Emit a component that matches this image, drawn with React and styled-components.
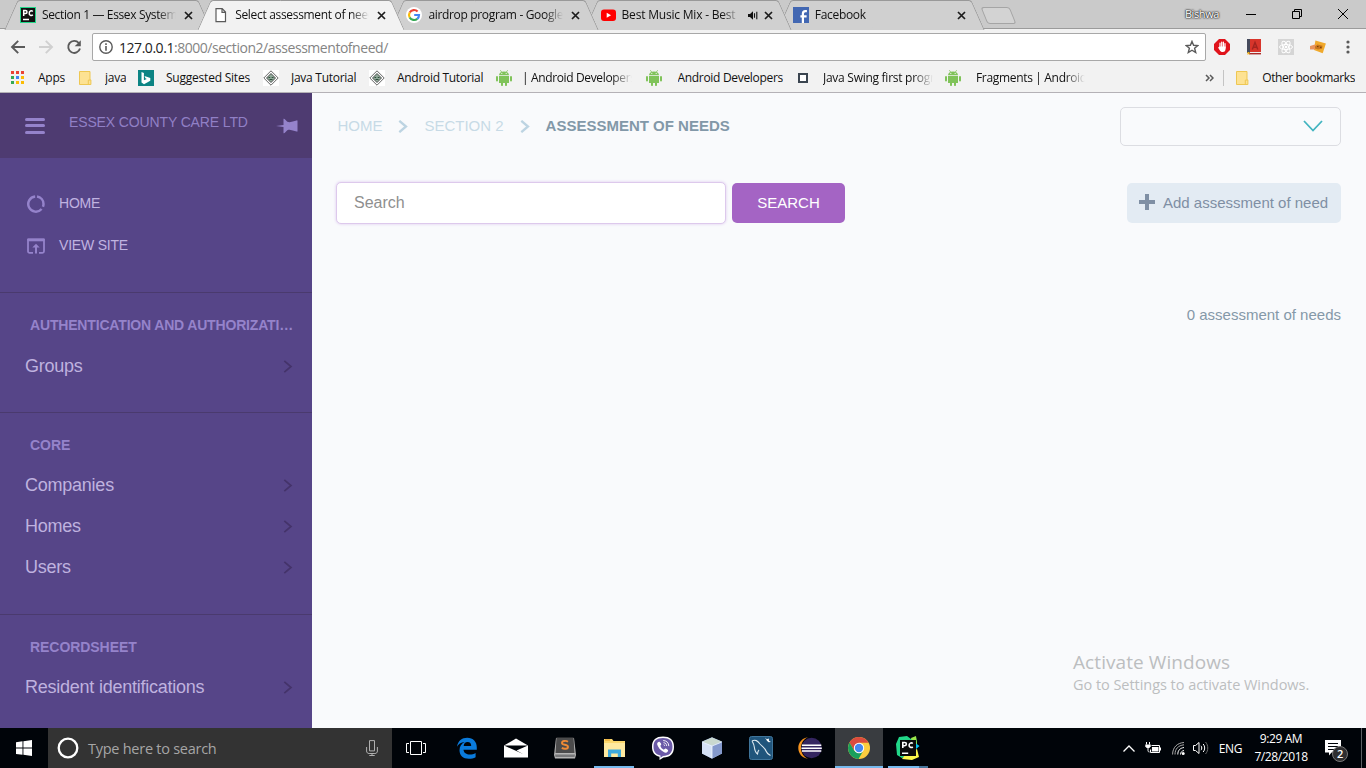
import React from 'react'
import styled, { createGlobalStyle } from 'styled-components'

const GlobalStyle = createGlobalStyle`
  * { box-sizing: border-box; }
  body {
    margin: 0;
    overflow: hidden;
    font-family: "Liberation Sans", Arial, sans-serif;
  }
  svg { display: block; flex: none; }
`

const ui = '"Open Sans", "Noto Sans", sans-serif'

const Screen = styled.div`
  display: flex;
  flex-direction: column;
  width: 1366px;
  height: 768px;
`

/* ---------- browser tabs ---------- */

const TabStrip = styled.div`
  display: flex;
  height: 29px;
  padding-left: 5px;
  background: #cacaca;
  box-shadow: inset 0 -1px 0 #9b9b9b;
  font-family: ${ui};
`

const Tab = styled.div`
  position: relative;
  z-index: ${p => p.$z};
  display: flex;
  align-items: center;
  width: 206.2px;
  height: 29px;
  margin-right: -13px;
  padding: 1px 18px 0 15px;
  isolation: isolate;

  &::before,
  &::after {
    content: '';
    position: absolute;
    z-index: -1;
    top: 0;
    height: ${p => (p.$active ? 29 : 28.5)}px;
    background: ${p => (p.$active ? '#f2f2f2' : '#d0d0d0')};
    border-top: 1px solid #999;
  }
  &::before {
    left: 6px;
    width: 100px;
    border-left: 1px solid #999;
    border-top-left-radius: 3px;
    transform: skewX(-24deg);
  }
  &::after {
    right: 6px;
    width: 110px;
    border-right: 1px solid #999;
    border-top-right-radius: 3px;
    transform: skewX(24deg);
  }
`

const TabTitle = styled.span`
  flex: 1;
  margin-left: 6px;
  overflow: hidden;
  white-space: nowrap;
  font-size: 12px;
  line-height: 18px;
  letter-spacing: ${p => p.$ls || -0.3}px;
  color: #111;
  mask-image: linear-gradient(to right, #000 calc(100% - 18px), transparent);
`

const TabEnd = styled.span`
  display: flex;
  align-items: center;
  gap: 6px;
  margin-left: 8px;
`

const NewTab = styled.div`
  width: 29px;
  height: 17px;
  margin: 7px 0 0 13px;
  background: #d3d3d3;
  border: 1px solid #a5a5a5;
  border-radius: 3px;
  transform: skewX(22deg);
`

const WindowControls = styled.div`
  display: flex;
  align-items: center;
  gap: 36px;
  height: 27px;
  margin-left: auto;
  padding-right: 18px;
`

const Profile = styled.span`
  font-size: 11px;
  letter-spacing: -0.4px;
  color: #fff;
  text-shadow: 0 0 1px #222, 0 0 2px #222, 0 0 2px #333;
  margin-right: -9px;
`

/* ---------- toolbar ---------- */

const Toolbar = styled.div`
  display: flex;
  align-items: center;
  height: 35px;
  padding: 1px 10px 0 10px;
  background: #f2f2f2;
  font-family: ${ui};
`

const NavButtons = styled.div`
  display: flex;
  gap: 12px;
  width: 82px;
`

const Omnibox = styled.div`
  display: flex;
  align-items: center;
  width: 1114px;
  height: 28px;
  padding: 0 6px;
  background: #fff;
  border: 1px solid #a8a8a8;
  border-radius: 2px;
`

const Url = styled.span`
  flex: 1;
  margin-left: 6px;
  font-size: 14px;
  letter-spacing: -0.46px;
  color: #222;
  span { color: #848484; }
`

const Extensions = styled.div`
  display: flex;
  align-items: center;
  gap: 16px;
  margin-left: 8px;
  svg:last-child { margin-left: 4px; }
`

const BookmarkBar = styled.div`
  display: flex;
  align-items: center;
  height: 29px;
  padding: 0 0 1px 10px;
  background: #f2f2f2;
  border-bottom: 1px solid #b4b1b6;
  font-family: ${ui};
`

const Bookmark = styled.div`
  display: flex;
  align-items: center;
  gap: ${p => p.$gap || 12}px;
  width: ${p => p.$width}px;
`

const BookmarkLabel = styled.span`
  max-width: 110px;
  overflow: hidden;
  white-space: nowrap;
  font-size: 12px;
  line-height: 18px;
  letter-spacing: ${p => p.$ls || -0.27}px;
  color: #111;
  mask-image: ${p => (p.$fade ? 'linear-gradient(to right, #000 calc(100% - 20px), transparent)' : 'none')};
`

const Overflow = styled.div`
  display: flex;
  align-items: center;
  margin-left: auto;
  padding-right: 11px;
`

const BarSeparator = styled.div`
  width: 1px;
  height: 16px;
  margin: 0 10px 0 9px;
  background: #c4c4c4;
`

/* ---------- admin page ---------- */

const Page = styled.div`
  display: flex;
  flex: 1;
  min-height: 0;
  background: #f9fafc;
`

const Sidebar = styled.div`
  width: 312px;
  overflow: hidden;
  background: #564588;
`

const SidebarHeader = styled.div`
  display: flex;
  align-items: center;
  height: 65px;
  padding: 0 14px 0 25px;
  background: #4e3b71;
`

const Burger = styled.div`
  display: flex;
  flex-direction: column;
  gap: 3.5px;
  width: 20px;
  span {
    height: 3px;
    border-radius: 2px;
    background: #9583cb;
  }
`

const SiteName = styled.div`
  flex: 1;
  margin: -7px 0 0 24px;
  font-size: 14px;
  letter-spacing: -0.13px;
  white-space: nowrap;
  color: #9180c6;
`

const SiteLinks = styled.div`
  height: 134px;
  padding: 24px 25px 0;
`

const SiteLink = styled.div`
  display: flex;
  align-items: center;
  gap: 13px;
  height: 42px;
  font-size: 14px;
  letter-spacing: -0.2px;
  color: #c0b3e0;
  padding-left: 1px;
  span { margin-bottom: 1px; }
`

const Section = styled.div`
  padding: 20px 17px 26px 25px;
  border-top: 1px solid #4a3a6e;
`

const SectionTitle = styled.div`
  height: 32px;
  padding: 4px 0 0 5px;
  overflow: hidden;
  white-space: nowrap;
  text-overflow: ellipsis;
  font-size: 14px;
  font-weight: bold;
  letter-spacing: ${p => p.$ls || -0.06}px;
  color: #9583cb;
`

const SectionItem = styled.div`
  display: flex;
  align-items: center;
  justify-content: space-between;
  height: 41px;
  padding-top: ${p => (p.$single ? 1 : 0)}px;
  padding-right: 2.5px;
  font-size: 18px;
  letter-spacing: -0.24px;
  color: #bfb2df;
`

const Content = styled.div`
  flex: 1;
  display: flex;
  flex-direction: column;
  padding: 14px 25px 0 24px;
`

const TopRow = styled.div`
  display: flex;
  justify-content: space-between;
  height: 39px;
`

const Breadcrumbs = styled.div`
  display: flex;
  align-items: center;
  padding: 0 0 2px 1.4px;
  font-size: 15px;
  color: #c7dae6;
  svg { margin: 2px 16px 0; }
`

const Current = styled.span`
  font-weight: bold;
  color: #8298a8;
`

const SelectBox = styled.div`
  display: flex;
  align-items: center;
  justify-content: flex-end;
  width: 221px;
  height: 39px;
  padding: 0 17px 2px 0;
  border: 1px solid #dcdde2;
  border-radius: 5px;
`

const ActionRow = styled.div`
  display: flex;
  align-items: center;
  height: 42px;
  margin-top: 36px;
`

const SearchInput = styled.div`
  width: 390px;
  height: 42px;
  padding: 0 17px;
  background: #fff;
  border: 1px solid #ddc9ec;
  border-radius: 5px;
  box-shadow: 0 0 3px #dcc6ee;
  font-size: 16px;
  line-height: 40px;
  color: #8f8f8f;
`

const SearchButton = styled.div`
  width: 113px;
  height: 40px;
  margin-left: 6px;
  border-radius: 5px;
  background: #a464c4;
  color: #fff;
  font-size: 15px;
  line-height: 40px;
  text-align: center;
`

const AddButton = styled.div`
  display: flex;
  align-items: center;
  gap: 8px;
  width: 214px;
  height: 40px;
  margin-left: auto;
  padding: 0 0 2px 12px;
  border-radius: 5px;
  background: #e3ebf3;
  color: #7f8fa4;
  font-size: 15px;
  white-space: nowrap;
`

const ResultCount = styled.div`
  margin-top: 82px;
  font-size: 15px;
  line-height: 18px;
  text-align: right;
  color: #8598a8;
`

const Watermark = styled.div`
  width: 268px;
  margin: auto 0 33px auto;
  font-family: ${ui};
  color: #bcbec0;
`

const WatermarkTitle = styled.div`
  font-size: 19px;
  line-height: 26px;
  letter-spacing: 0.08px;
`

const WatermarkText = styled.div`
  font-size: 14.5px;
  line-height: 20px;
  letter-spacing: -0.04px;
`

/* ---------- taskbar ---------- */

const Taskbar = styled.div`
  display: flex;
  height: 40px;
  background: #000409;
  font-family: ${ui};
`

const StartButton = styled.div`
  display: flex;
  align-items: center;
  justify-content: center;
  width: 48px;
`

const TaskSearch = styled.div`
  display: flex;
  align-items: center;
  width: 344px;
  padding: 0 14px 0 9px;
  background: #333;
  color: #a6a6a6;
  font-size: 14.5px;
  letter-spacing: -0.26px;
  span { flex: 1; margin-left: 9px; }
`

const TaskApp = styled.div`
  display: flex;
  align-items: center;
  justify-content: center;
  width: 48px;
  height: 40px;
  margin-right: ${p => p.$after || 1}px;
  background: ${p => (p.$focused ? '#393c40' : 'none')};
  box-shadow: ${p => (p.$focused ? 'inset 0 -2px 0 #76b9ed' : 'none')};
`

const RunningApp = styled(TaskApp)`
  width: 40px;
  margin: 0 5px 0 4px;
  background: linear-gradient(#76b9ed, #76b9ed) 0 38px / ${p => p.$line || 40}px 2px no-repeat,
    linear-gradient(#46759b, #46759b) 0 38px / 40px 2px no-repeat;
`

const Tray = styled.div`
  display: flex;
  align-items: center;
  margin-left: auto;
  color: #fff;
  font-size: 12px;
  letter-spacing: -0.4px;
`

const TrayIcon = styled.div`
  margin-right: ${p => p.$after}px;
`

const Clock = styled.div`
  width: 60px;
  margin-left: 9px;
  line-height: 18px;
  text-align: center;
`

const Notifications = styled.div`
  position: relative;
  margin: 0 20px 0 14px;
`

const Badge = styled.span`
  position: absolute;
  left: 7px;
  top: 6px;
  width: 16px;
  height: 16px;
  border: 1px solid #777;
  border-radius: 50%;
  background: #2e2e30;
  font-size: 11px;
  font-weight: 600;
  line-height: 14px;
  text-align: center;
`

const ShowDesktop = styled.div`
  width: 5px;
  height: 40px;
  border-left: 1px solid #5c5f63;
`

/* ---------- icons ---------- */

const Svg = ({ w = 16, h = w, box, children, ...rest }) => (
  <svg width={w} height={h} viewBox={box || `0 0 ${w} ${h}`} fill="none" {...rest}>{children}</svg>
)

const CloseIcon = () => (
  <Svg w={9} stroke="#1c1c1c" strokeWidth="1.7"><path d="M1 1l7 7M8 1L1 8" /></Svg>
)

const PyCharmTile = () => (
  <Svg>
    <path d="M0 0h16v16H0z" fill="#21d789" />
    <path d="M1 1h14v14H1z" fill="#111" />
    <path d="M3.700 9V3.500h1.800a1.500 1.500 0 010 3H3.700M12.800 4.500a2 2 0 00-3.500 1.600 2 2 0 003.500 1.700M3 12.600h6" stroke="#fff" strokeWidth="1.500" />
  </Svg>
)

const PageIcon = () => (
  <Svg stroke="#5a5a5a" strokeWidth="1.2"><path d="M3 1.600h6.200l3.300 3.500v9.500H3zM9 1.800v3.500h3.400" fill="#fff" /></Svg>
)

const GoogleIcon = () => (
  <Svg>
    <circle cx="8" cy="8" r="8" fill="#fff" />
    <g strokeWidth="2.2">
      <path d="M11.600 4.500A5 5 0 003.700 5.500" stroke="#ea4335" />
      <path d="M3.700 5.500a5 5 0 000 5" stroke="#fbbc05" />
      <path d="M3.700 10.500a5 5 0 007.600 1.300" stroke="#34a853" />
      <path d="M11.300 11.800A5 5 0 0013 8H8.200" stroke="#4285f4" />
    </g>
  </Svg>
)

const YouTubeIcon = () => (
  <Svg>
    <rect x="1" y="2.500" width="15" height="11.500" rx="3" fill="#f00" />
    <path d="M6.700 5.700v5l4.400-2.500z" fill="#fff" />
  </Svg>
)

const FacebookIcon = () => (
  <Svg>
    <path d="M0 0h16v16H0z" fill="#4267b2" />
    <path d="M9.900 16V6.800c0-1.800.9-2.600 2.400-2.600h1.600M7.400 9.300h6.200" stroke="#fff" strokeWidth="2.200" />
  </Svg>
)

const AudioIcon = () => (
  <Svg w={10} h={9}>
    <path d="M0 3h2l3-2.800v8.600L2 6H0z" fill="#111" />
    <path d="M6.500 2.300v4.400M8.800.8v7.400" stroke="#111" strokeWidth="1.100" />
  </Svg>
)

const BackIcon = ({ color }) => (
  <Svg stroke={color} strokeWidth="1.9"><path d="M15 8H2.500M8.200 1.800L2 8l6.200 6.200" /></Svg>
)

const ForwardIcon = ({ color }) => (
  <Svg stroke={color} strokeWidth="1.9"><path d="M1 8h12.500M7.800 1.800L14 8l-6.200 6.200" /></Svg>
)

const ReloadIcon = () => (
  <Svg>
    <path d="M12.800 4A6 6 0 1014 9.600" stroke="#5a5a5a" strokeWidth="1.9" />
    <path d="M14.800 1.200v6.100H8.700z" fill="#5a5a5a" />
  </Svg>
)

const InfoIcon = () => (
  <Svg w={14}>
    <circle cx="7" cy="7" r="6.200" stroke="#5a5a5a" strokeWidth="1.400" />
    <path d="M7 3.200v1.700M7 6v4.700" stroke="#5a5a5a" strokeWidth="1.600" />
  </Svg>
)

const StarIcon = () => (
  <Svg w={14} stroke="#5a5a5a" strokeWidth="1.400">
    <path d="M7 1.400l1.600 3.900 4.300.3-3.300 2.700 1.100 4.200L7 10.200l-3.700 2.300 1.100-4.200-3.300-2.700 4.300-.3z" />
  </Svg>
)

const AdblockIcon = () => (
  <Svg>
    <path d="M5 0h6l5 5v6l-5 5H5l-5-5V5z" fill="#e0141c" />
    <path d="M6 9V4.200M7.700 8V3M9.400 8V3M11 9V4.500" stroke="#fff" strokeWidth="1.200" strokeLinecap="round" />
    <path d="M5.400 7.500h6.200v2.200c0 2-1 3.300-2.800 3.300-1.600 0-2.400-.6-3.200-2L4 8.600l1-.6z" fill="#fff" />
  </Svg>
)

const DictionaryIcon = () => (
  <Svg>
    <path d="M1 0h14v13H1z" fill="#d8352b" />
    <path d="M1 0h3v14H1z" fill="#454a5c" />
    <path d="M4 13h11v1H4z" fill="#eee" />
    <path d="M3 14h12v1.400H3z" fill="#aa2a28" />
    <path d="M1.500 13h2v3l-1-1-1 1z" fill="#f1b51c" />
    <path d="M6.300 10.500L9 3.500l2.800 7M7.300 8.300h3.500" stroke="#a3241f" strokeWidth="1.400" />
  </Svg>
)

const ReactIcon = () => (
  <Svg>
    <path d="M0 0h16v16H0z" fill="#d5d5d5" />
    <g stroke="#fff" strokeWidth="1">
      <ellipse cx="8" cy="8" rx="6.500" ry="2.500" />
      <ellipse cx="8" cy="8" rx="6.500" ry="2.500" transform="rotate(60 8 8)" />
      <ellipse cx="8" cy="8" rx="6.500" ry="2.500" transform="rotate(120 8 8)" />
    </g>
    <circle cx="8" cy="8" r="1.300" fill="#fff" />
  </Svg>
)

const TagIcon = () => (
  <Svg>
    <path d="M5.400 1.500l10.500 3-3.200 9.800L4 11z" fill="#f0a92c" />
    <path d="M0 7l5-1.400 2.300 2L5 10.500H0z" fill="#e8935c" />
    <path d="M5 7.500l2.500-2 5 1.300-.5 3-4 .8-3-1z" fill="#c9741a" />
    <path d="M7 7.600h1.500M10 8.300h1.500" stroke="#6b3c0c" />
  </Svg>
)

const MenuDots = () => (
  <Svg w={4} h={14}>
    <g fill="#5a5a5a"><circle cx="2" cy="2" r="1.600" /><circle cx="2" cy="7" r="1.600" /><circle cx="2" cy="12" r="1.600" /></g>
  </Svg>
)

const AppsIcon = () => {
  const colors = ['#ea4335', '#ea4335', '#ea4335', '#34a853', '#4285f4', '#fbbc05', '#34a853', '#fbbc05', '#fbbc05']
  return (
    <Svg>
      {colors.map((c, i) => <rect key={i} x={1 + (i % 3) * 5} y={1 + Math.floor(i / 3) * 5} width="3" height="3" fill={c} />)}
    </Svg>
  )
}

const FolderIcon = () => (
  <Svg>
    <path d="M2.500 1.500h10.500v8.400h.9v4.600H2.500z" fill="#fde293" stroke="#eec752" />
    <path d="M11.300 14.300v-4.200h1.700" stroke="#eec752" />
  </Svg>
)

const BingIcon = () => (
  <Svg>
    <path d="M0 0h16v16H0z" fill="#0c8484" />
    <path d="M3.500 2l2.400.9v7.300L8.800 9 7.400 8.200l-.9-2.300 5.800 2.100v2.800L6 14.200l-2.500-1.600z" fill="#fff" />
  </Svg>
)

const TutorialIcon = () => (
  <Svg>
    <path d="M0 0h16v16H0z" fill="#fff" />
    <path d="M8 .8L15.200 8 8 15.200.8 8z" stroke="#666" />
    <path d="M8 3.500L12.500 8 8 12.500 3.500 8z" fill="#8fa898" stroke="#444" strokeWidth=".9" />
    <path d="M5.500 7.500h1.700M8.700 7.500h1.800M6.500 9.500h3" stroke="#2f4f3c" />
  </Svg>
)

const AndroidIcon = () => (
  <Svg>
    <g fill="#80c35a">
      <path d="M3 5.300C3 3.200 5 1.600 8 1.600s5 1.600 5 3.700z" />
      <path d="M3 6h10v7H3z" />
      <rect x="0" y="6" width="2" height="5.500" rx="1" />
      <rect x="14" y="6" width="2" height="5.500" rx="1" />
      <rect x="5" y="12" width="2" height="4" rx=".8" />
      <rect x="9" y="12" width="2" height="4" rx=".8" />
    </g>
    <path d="M4.300.2l1.500 2M11.700.2l-1.500 2" stroke="#80c35a" strokeWidth=".8" />
    <path d="M5.300 3.400h1M9.700 3.400h1" stroke="#fff" />
  </Svg>
)

const SquareIcon = () => (
  <Svg><rect x="4" y="4" width="8" height="8" fill="#fff" stroke="#3b4550" strokeWidth="2" /></Svg>
)

const PinIcon = () => (
  <Svg w={22} h={16}>
    <path d="M0 8l7.500-1V.8c.7-.2 1.300.2 1.600.8l2.200 2.200c1.500.7 3 .6 4.500 0l4.800-1.400c.6-.2.9 0 .9.500v10.200c0 .5-.3.700-.9.500l-4.800-1.400c-1.500-.6-3-.7-4.500 0l-2.200 2.200c-.3.600-.9 1-1.600.8V9z" fill="#9583cb" />
  </Svg>
)

const HomeIcon = () => (
  <Svg w={20}>
    <path d="M11 2.100A8 8 0 0117.800 10a8 8 0 01-.6 2.900M15.800 15.300A8 8 0 119 2.100" stroke="#9583cb" strokeWidth="2.600" transform="translate(.6 1.500) scale(.95)" />
  </Svg>
)

const ViewSiteIcon = () => (
  <Svg w={20}>
    <path d="M7 17H3.500A1.500 1.500 0 012 15.500V4h16v11.500a1.500 1.500 0 01-1.500 1.500H13" stroke="#9583cb" strokeWidth="1.800" transform="translate(0 .8)" />
    <path d="M1.500 3.300h17v3h-17z" fill="#9583cb" />
    <path d="M10 18.500v-8" stroke="#9583cb" strokeWidth="2" />
    <path d="M6.300 12.500L10 8.700l3.700 3.800z" fill="#9583cb" />
  </Svg>
)

const Chevron = ({ color, width = 1.7, h = 13 }) => (
  <Svg w={10} h={h} box="0 0 10 13" stroke={color} strokeWidth={width}><path d="M1.300 .8L8 6.500l-6.700 5.700" /></Svg>
)

const PlusIcon = () => (
  <Svg stroke="#7f8fa4" strokeWidth="4"><path d="M8 0v16M0 8h16" /></Svg>
)

/* ---------- taskbar icons ---------- */

const WindowsIcon = () => (
  <Svg>
    <path d="M0 2.200l6.500-.9v6.300H0zM7.400 1.200L16 0v7.600H7.400zM0 8.500h6.500v6.300L0 13.900zM7.400 8.500H16V16l-8.600-1.200z" fill="#fff" />
  </Svg>
)

const TaskViewIcon = () => (
  <Svg w={20} h={14} stroke="#fff">
    <path d="M4.500.5h11v13h-11zM3 2.500H.5v9H3M17 2.500h2.500v9H17" />
  </Svg>
)

const EdgeIcon = () => (
  <Svg w={22}>
    <path d="M1 9.800C1.800 4 6 .8 11.200.8c6 0 9.600 4.100 9.600 9.700v2.300H7.500c.2 3.200 3 4.700 6.200 4.700 2.200 0 4.100-.6 5.900-1.600v4.300c-2 1-4.200 1.500-6.800 1.500-5.800 0-9.300-3.500-9.300-8.500 0-3.600 2-6.700 5.300-8.100C4.700 5.600 2.300 7.200 1 9.800zm6.700-.9h7.500c0-2.400-1.200-3.900-3.600-3.900-2.300 0-3.700 1.700-3.900 3.900z" fill="#0a7bdc" />
  </Svg>
)

const MailIcon = () => (
  <Svg w={24} h={20}>
    <path d="M0 7.500L12 .5l12 7v12H0z" fill="#fff" />
    <path d="M0 7.500h24l-11.500 5L19 16 0 7.500z" fill="#000409" />
  </Svg>
)

const SublimeIcon = () => (
  <Svg w={22}>
    <path d="M2 1h18l2 17-1 3.500H1L0 18z" fill="#b5b5b5" />
    <path d="M2.500.5h17l1 15.500h-19z" fill="#4b4b4c" />
    <path d="M1 17.500h20l-.5 2.500h-19z" fill="#77787a" />
    <path d="M14 4.700c-2-1.300-6-1-6 1.200 0 2.400 6 1.300 6 4 0 2.200-4 2.400-6.200 1" stroke="#f08a35" strokeWidth="1.900" />
  </Svg>
)

const ExplorerIcon = () => (
  <Svg w={22} h={18}>
    <path d="M1 0h8l1.500 2H22v16H1z" fill="#fbd86e" />
    <path d="M1 4h21v14H1z" fill="#fee9a0" />
    <path d="M5 10.500h13V18h-3.200v-3.500H8.200V18H5z" fill="#3ea9dc" />
    <path d="M2 1h5" stroke="#e79a20" />
  </Svg>
)

const ViberIcon = () => (
  <Svg w={24}>
    <path d="M12 .5c7 0 11 3.200 11 10.300S19 21.500 12.500 21.500L8.500 24v-3.200C3.500 19.500 1 16.500 1 10.800 1 3.700 5 .5 12 .5z" fill="#fff" />
    <path d="M12 2c6.200 0 9.500 2.700 9.500 8.800S18 20 12 20l-2.500 1.800v-2.300c-4.500-.8-7-3.500-7-8.700C2.500 4.700 5.800 2 12 2z" fill="#6b5aa8" />
    <path d="M7 6.300c1-1.200 1.800-.6 3 1.200.8 1.200-.3 1.500-.6 2.300.3 1.800 1.800 3.300 3.500 3.900.9-.4 1-1.600 2.300-.9 2 1.200 2.500 1.800 1.300 3-1.200 1.400-2.500.9-4.200 0C9.200 14 7.300 11.500 6.300 8.700c-.3-1 0-1.700.7-2.400z" fill="#fff" />
    <path d="M12.200 4.500c3.500.2 5.500 2.200 5.600 5.600M12.500 6.700c2 .2 3 1.200 3.100 3.200M12.700 8.700c.6 0 .9.400.9 1" stroke="#fff" strokeWidth=".9" />
  </Svg>
)

const NetBeansIcon = () => (
  <Svg w={22} h={22}>
    <path d="M11 .3l10 4.200v12L11 21.700 1 16.500v-12z" fill="#a9c1e8" />
    <path d="M11 .5l9.800 4.200L11 8.600 1.200 4.700z" fill="#c9d8cf" />
    <path d="M1 5l10 4v12.600L1 16.500z" fill="#d5e1f6" />
    <path d="M21 5l-10 4v12.600l10-5.100z" fill="#8499cc" />
    <path d="M1.500 5.200L11 9l9.500-3.800M11 9v12" stroke="#f3f7ff" strokeWidth=".8" />
  </Svg>
)

const MySqlIcon = () => (
  <Svg w={24}>
    <rect x=".5" y=".5" width="23" height="23" rx="2" fill="#20557c" stroke="#3f759b" />
    <path d="M3 5c3-2 6 0 8 3 2 2.500 5 4 6 7 .6 2 2 3 4.500 4.500M3 5c1 2 2 3 2.300 6 .4 3 1 5.500 3.200 7 .2-2 .3-3 1.500-4" stroke="#dce8ef" strokeWidth="1.100" />
    <path d="M16 1.500l1.800 1.800 2-.8.200 2.200 2 1.200-2.300.3-1.600-1.200z" fill="#fff" />
  </Svg>
)

const EclipseIcon = () => (
  <Svg w={24} h={22}>
    <path d="M10 .2C4 .9.300 5.600.300 11S4 21.100 10 21.800C5.500 19.800 3 16 3 11S5.500 2.200 10 .2z" fill="#f7941e" />
    <circle cx="13.600" cy="11" r="10.200" fill="#342560" />
    <path d="M3.900 8.300h19.400M3.500 11.200h20.300M3.900 14.100h19.400" stroke="#fff" strokeWidth="1.500" />
  </Svg>
)

const ChromeIcon = () => (
  <Svg w={22}>
    <circle cx="11" cy="11" r="11" fill="#fccd3f" />
    <path d="M11 0a11 11 0 019.500 5.700H11L6.300 13.700 1.500 5.500A11 11 0 0111 0z" fill="#db4b3e" />
    <path d="M1.500 5.500A11 11 0 0010.500 22l4.800-8.300-4.300 2.500-4.700-2.500z" fill="#199f5c" />
    <circle cx="11" cy="11" r="5.200" fill="#fff" />
    <circle cx="11" cy="11" r="4.200" fill="#4688f1" />
  </Svg>
)

const PyCharmIcon = () => (
  <Svg w={24}>
    <path d="M3 1l8-1 4 3 5-2 1 6-3 10-12 5-5-3L0 8z" fill="#21d789" />
    <path d="M15 2l5-2 1 8-4 2z" fill="#9be64a" />
    <path d="M18 6l5.500 4-4.500 4z" fill="#07c3f2" />
    <path d="M21 13l2 8-7 3-10-1 3-4z" fill="#fcf84a" />
    <path d="M4 4h16v16H4z" fill="#0b0b0b" />
    <path d="M6.800 12V6.500h2a1.500 1.500 0 010 3.200h-2M16.800 7.500a2.200 2.200 0 00-3.700 1.700 2.200 2.200 0 003.700 1.700M6 17.300h6.200" stroke="#fff" strokeWidth="1.600" />
  </Svg>
)

const MicIcon = () => (
  <Svg w={12} h={16} stroke="#b0b0b0">
    <path d="M3.500.6h5v10.300h-5zM.6 7v4c0 1.600 1 2.500 2.500 2.500h5.800c1.500 0 2.500-.9 2.500-2.500V7M6 13.500v2M3.300 15.500h5.400" />
  </Svg>
)

const BatteryIcon = () => (
  <Svg w={16} h={12}>
    <path d="M1.500 0v2.500M4.500 0v2.500M3 6v2.500c0 1 .5 1.500 1.500 1.500" stroke="#fff" />
    <path d="M.3 2.500h5.400v2L4.300 6H1.700L.3 4.500z" fill="#fff" />
    <path d="M6.500 3.500h8v7h-9v-3M15.500 5.500v3" stroke="#fff" />
    <path d="M7 5h6.500v4.500H6.800z" fill="#fff" />
  </Svg>
)

const WifiIcon = () => (
  <Svg w={13}>
    <circle cx="11.200" cy="11.500" r="1.500" fill="#fff" />
    <path d="M8.500 12.500c0-2 1-3.500 3.500-4M5.800 12.500c0-4 2-6.300 6.200-7" stroke="#fff" />
    <path d="M3 12.500C3 7 6 3.500 12 2.800M.6 12.500C.6 5.500 5 1 12 .5" stroke="#a8a8a8" />
  </Svg>
)

const SoundIcon = () => (
  <Svg w={16} h={14} stroke="#fff">
    <path d="M.5 4.500h2L6 1.500v11l-3.500-3h-2zM8 4.800c1 1.200 1 3.200 0 4.400M10.200 3c2 2.200 2 5.800 0 8" />
    <path d="M12.500 1c3 3.300 3 8.700 0 12" stroke="#6d6d6d" />
  </Svg>
)

const NoteIcon = () => (
  <Svg w={16} h={16}>
    <path d="M0 0h16v12.500H6.500L4 15.500v-3H0z" fill="#fff" />
    <path d="M3 3.500h10M3 6.500h10M3 9.500h7" stroke="#000409" />
  </Svg>
)

/* ---------- data ---------- */

const tabs = [
  { title: 'Section 1 — Essex System', icon: <PyCharmTile />, ls: -0.36 },
  { title: 'Select assessment of need', icon: <PageIcon />, active: true, ls: -0.32 },
  { title: 'airdrop program - Google', icon: <GoogleIcon />, ls: -0.33 },
  { title: 'Best Music Mix - Best', icon: <YouTubeIcon />, audio: true, ls: -0.2 },
  { title: 'Facebook', icon: <FacebookIcon /> },
]

const bookmarks = [
  { label: 'Apps', icon: <AppsIcon />, width: 67 },
  { label: 'java', icon: <FolderIcon />, width: 61 },
  { label: 'Suggested Sites', icon: <BingIcon />, width: 125, ls: -0.22 },
  { label: 'Java Tutorial', icon: <TutorialIcon />, width: 106 },
  { label: 'Android Tutorial', icon: <TutorialIcon />, width: 127, ls: -0.3 },
  { label: '| Android Developers', icon: <AndroidIcon />, width: 150, gap: 10, fade: true, ls: -0.36 },
  { label: 'Android Developers', icon: <AndroidIcon />, width: 149, gap: 15.5, ls: -0.31 },
  { label: 'Java Swing first program', icon: <SquareIcon />, width: 150, fade: true },
  { label: 'Fragments | Android', icon: <AndroidIcon />, width: 140, gap: 15, fade: true, ls: -0.33 },
]

const sections = [
  { title: 'Authentication and Authorization', items: ['Groups'], single: true, ls: -0.17 },
  { title: 'Core', items: ['Companies', 'Homes', 'Users'] },
  { title: 'Recordsheet', items: ['Resident identifications'] },
]

const Browser = () => (
  <>
    <TabStrip>
      {tabs.map((tab, i) =>
        <Tab key={tab.title} $active={tab.active} $z={tab.active ? 10 : 8 - i}>
          {tab.icon}
          <TabTitle $ls={tab.ls}>{tab.title}</TabTitle>
          <TabEnd>
            {tab.audio && <AudioIcon />}
            <CloseIcon />
          </TabEnd>
        </Tab>
      )}
      <NewTab />
      <WindowControls>
        <Profile>Bishwa</Profile>
        <Svg w={10} stroke="#000"><path d="M0 5.500h10" /></Svg>
        <Svg w={10} stroke="#000"><path d="M.5 2.500h7v7h-7zM2.500 2.500v-2h7v7h-2" /></Svg>
        <Svg w={10} stroke="#000"><path d="M0 0l10 10M10 0L0 10" /></Svg>
      </WindowControls>
    </TabStrip>
    <Toolbar>
      <NavButtons>
        <BackIcon color="#5a5a5a" />
        <ForwardIcon color="#d0d0d0" />
        <ReloadIcon />
      </NavButtons>
      <Omnibox>
        <InfoIcon />
        <Url>127.0.0.1<span>:8000/section2/assessmentofneed/</span></Url>
        <StarIcon />
      </Omnibox>
      <Extensions>
        <AdblockIcon />
        <DictionaryIcon />
        <ReactIcon />
        <TagIcon />
        <MenuDots />
      </Extensions>
    </Toolbar>
    <BookmarkBar>
      {bookmarks.map((b) =>
        <Bookmark key={b.label} $width={b.width} $gap={b.gap}>
          {b.icon}
          <BookmarkLabel $fade={b.fade} $ls={b.ls}>{b.label}</BookmarkLabel>
        </Bookmark>
      )}
      <Overflow>
        <Svg w={9} h={8} stroke="#5a5a5a" strokeWidth="1.500"><path d="M1 1l3 3-3 3M5 1l3 3-3 3" /></Svg>
        <BarSeparator />
        <Bookmark $gap={12}>
          <FolderIcon />
          <BookmarkLabel $ls={-0.38}>Other bookmarks</BookmarkLabel>
        </Bookmark>
      </Overflow>
    </BookmarkBar>
  </>
)

const App = () => (
  <Screen>
    <GlobalStyle />
    <Browser />
    <Page>
      <Sidebar>
        <SidebarHeader>
          <Burger><span /><span /><span /></Burger>
          <SiteName>ESSEX COUNTY CARE LTD</SiteName>
          <PinIcon />
        </SidebarHeader>
        <SiteLinks>
          <SiteLink><HomeIcon /><span>HOME</span></SiteLink>
          <SiteLink><ViewSiteIcon /><span>VIEW SITE</span></SiteLink>
        </SiteLinks>
        {sections.map((section) =>
          <Section key={section.title}>
            <SectionTitle $ls={section.ls}>{section.title.toUpperCase()}</SectionTitle>
            {section.items.map((item) =>
              <SectionItem key={item} $single={section.single}>{item}<Chevron color="#44336a" /></SectionItem>
            )}
          </Section>
        )}
      </Sidebar>
      <Content>
        <TopRow>
          <Breadcrumbs>
            <span>HOME</span>
            <Chevron color="#bdd4e2" width={2.3} />
            <span>SECTION 2</span>
            <Chevron color="#bdd4e2" width={2.3} />
            <Current>ASSESSMENT OF NEEDS</Current>
          </Breadcrumbs>
          <SelectBox>
            <Svg w={20} h={12} stroke="#42b4c0" strokeWidth="1.800"><path d="M1 1l9 9.500L19 1" /></Svg>
          </SelectBox>
        </TopRow>
        <ActionRow>
          <SearchInput>Search</SearchInput>
          <SearchButton>SEARCH</SearchButton>
          <AddButton><PlusIcon />Add assessment of need</AddButton>
        </ActionRow>
        <ResultCount>0 assessment of needs</ResultCount>
        <Watermark>
          <WatermarkTitle>Activate Windows</WatermarkTitle>
          <WatermarkText>Go to Settings to activate Windows.</WatermarkText>
        </Watermark>
      </Content>
    </Page>
    <Taskbar>
      <StartButton><WindowsIcon /></StartButton>
      <TaskSearch>
        <Svg w={22}><circle cx="11" cy="11" r="9.300" stroke="#fff" strokeWidth="2.300" /></Svg>
        <span>Type here to search</span>
        <MicIcon />
      </TaskSearch>
      <TaskApp $after={3}><TaskViewIcon /></TaskApp>
      <TaskApp><EdgeIcon /></TaskApp>
      <TaskApp><MailIcon /></TaskApp>
      <TaskApp><SublimeIcon /></TaskApp>
      <RunningApp><ExplorerIcon /></RunningApp>
      <TaskApp><ViberIcon /></TaskApp>
      <TaskApp><NetBeansIcon /></TaskApp>
      <TaskApp><MySqlIcon /></TaskApp>
      <TaskApp><EclipseIcon /></TaskApp>
      <TaskApp $focused><ChromeIcon /></TaskApp>
      <RunningApp $line={31}><PyCharmIcon /></RunningApp>
      <Tray>
        <TrayIcon $after={10}><Svg w={12} h={7} stroke="#fff" strokeWidth="1.300"><path d="M.5 6.500L6 1l5.500 5.500" /></Svg></TrayIcon>
        <TrayIcon $after={11}><BatteryIcon /></TrayIcon>
        <TrayIcon $after={8}><WifiIcon /></TrayIcon>
        <TrayIcon $after={10}><SoundIcon /></TrayIcon>
        <span>ENG</span>
        <Clock>9:29 AM<br />7/28/2018</Clock>
        <Notifications>
          <NoteIcon />
          <Badge>2</Badge>
        </Notifications>
        <ShowDesktop />
      </Tray>
    </Taskbar>
  </Screen>
)

export default App
